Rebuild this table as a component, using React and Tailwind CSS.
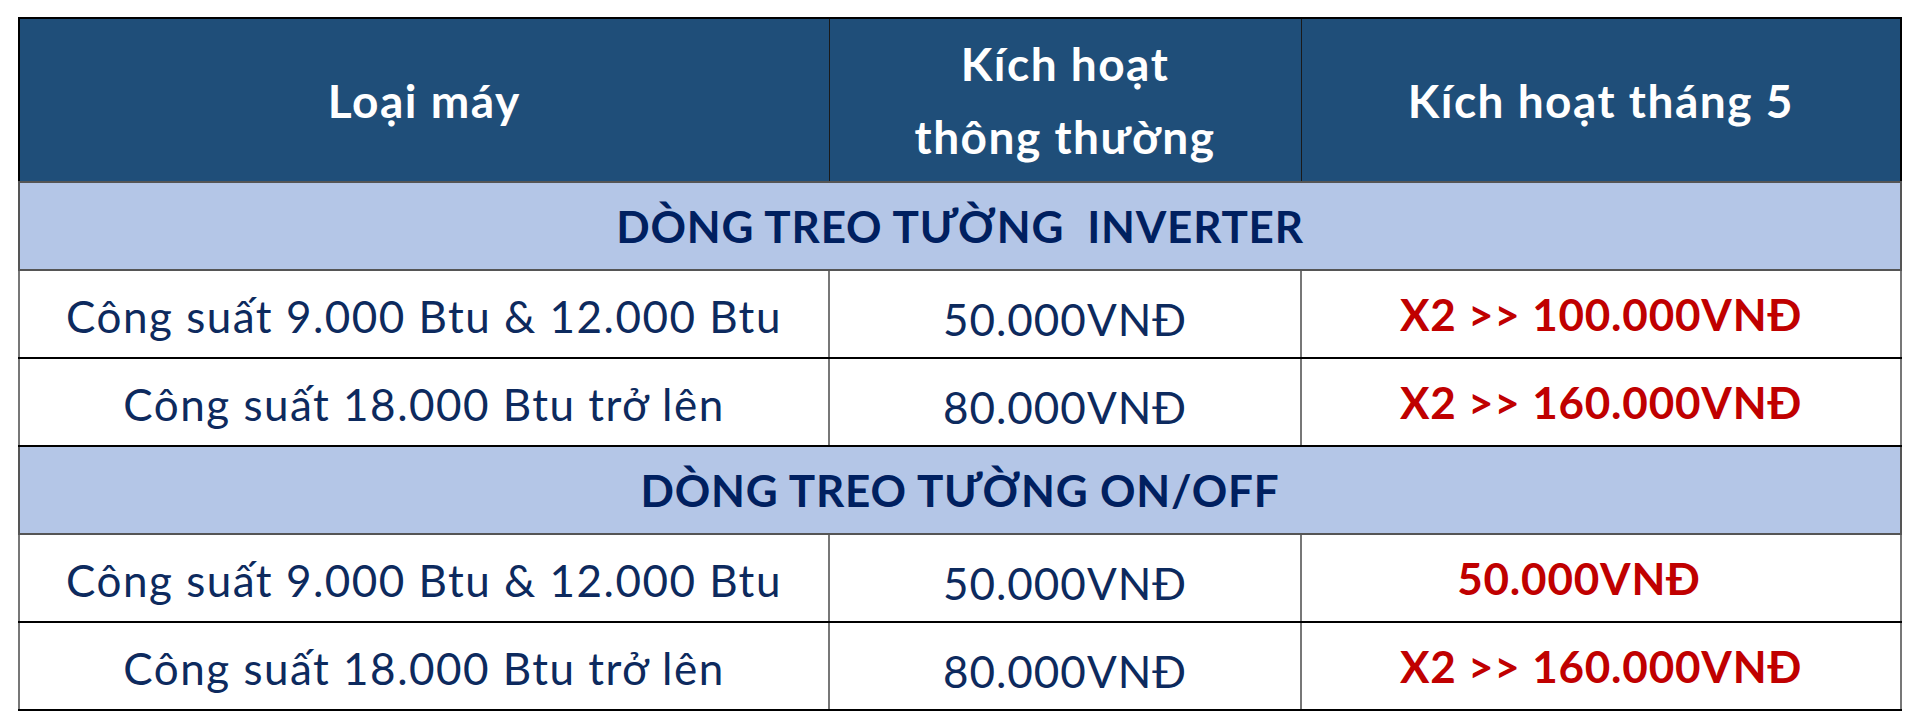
const rows = [
  { type: "section", label: "DÒNG TREO TƯỜNG\u00a0\u00a0INVERTER" },
  {
    type: "row",
    name: "Công suất 9.000 Btu & 12.000 Btu",
    normal: "50.000VNĐ",
    promo: "X2 >> 100.000VNĐ",
  },
  {
    type: "row",
    name: "Công suất 18.000 Btu trở lên",
    normal: "80.000VNĐ",
    promo: "X2 >> 160.000VNĐ",
  },
  { type: "section", label: "DÒNG TREO TƯỜNG ON/OFF" },
  {
    type: "row",
    name: "Công suất 9.000 Btu & 12.000 Btu",
    normal: "50.000VNĐ",
    promo: "50.000VNĐ",
    shift: true,
  },
  {
    type: "row",
    name: "Công suất 18.000 Btu trở lên",
    normal: "80.000VNĐ",
    promo: "X2 >> 160.000VNĐ",
  },
];

export default function App() {
  return (
    <div className="w-[1920px] h-[726px] bg-white pt-[17px] pl-[18px] font-['Lato','Noto_Sans',sans-serif]">
      <table className="w-[1882px] border-collapse table-fixed border-2 border-black">
        <colgroup>
          <col className="w-[810px]" />
          <col className="w-[472px]" />
          <col className="w-[600px]" />
        </colgroup>
        <thead>
          <tr className="h-[164px] bg-[#1f4e79] text-white font-bold text-[46px] tracking-[1.5px]">
            <th className="border border-[#1a1a1a] font-bold">Loại máy</th>
            <th className="border border-[#1a1a1a] font-bold leading-[73px]">
              Kích hoạt
              <br />
              thông thường
            </th>
            <th className="border border-[#1a1a1a] font-bold">Kích hoạt tháng 5</th>
          </tr>
        </thead>
        <tbody>
          {rows.map((r, i) =>
            r.type === "section" ? (
              <tr key={i} className="h-[88px] bg-[#b4c6e7]">
                <td
                  colSpan={3}
                  className="border-2 border-[#555] text-center text-[44px] tracking-[0.8px] font-bold text-[#002060] whitespace-pre"
                >
                  {r.label}
                </td>
              </tr>
            ) : (
              <tr key={i} className="h-[88px] bg-white text-[44px]">
                <td className="border-2 border-x-[#777] border-y-black text-center text-[#0d2a5e] tracking-[1.5px] pt-[4px]">
                  {r.name}
                </td>
                <td className="border-2 border-x-[#777] border-y-black text-center text-[#0d2a5e] tracking-[1px] pt-[10px]">
                  {r.normal}
                </td>
                <td
                  className={
                    "border-2 border-x-[#777] border-y-black text-center text-[#c00000] font-bold tracking-[0.8px]" +
                    (r.shift ? " pr-[44px]" : "")
                  }
                >
                  {r.promo}
                </td>
              </tr>
            )
          )}
        </tbody>
      </table>
    </div>
  );
}
